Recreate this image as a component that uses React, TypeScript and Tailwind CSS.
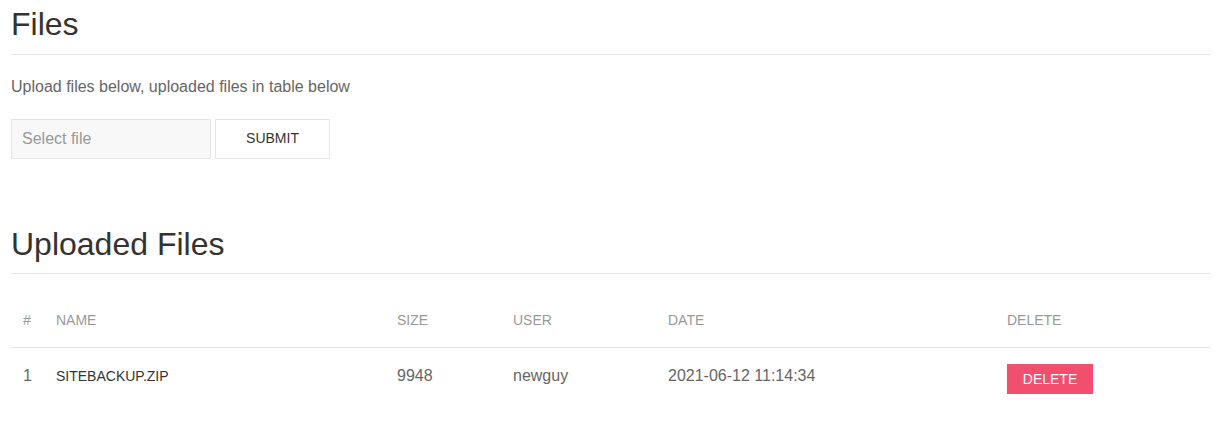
import React from "react";

export default function App() {
  const font = { fontFamily: '"Liberation Sans", Arial, sans-serif' };
  return (
    <div className="bg-white min-h-[432px] pl-[11px] pr-[18px] pt-[4px] text-[16px] leading-[1.5] text-[#666]" style={font}>
      <h2 className="text-[32px] leading-[1.3] text-[#333] font-normal pb-[8px] border-b border-[#e5e5e5]">Files</h2>
      <p className="mt-[20px]">Upload files below, uploaded files in table below</p>
      <form className="mt-[20px] flex gap-[4px]" onSubmit={(e) => e.preventDefault()}>
        <input
          type="text"
          placeholder="Select file"
          className="w-[200px] h-[40px] px-[10px] bg-[#f8f8f8] border border-[#e5e5e5] text-[16px] text-[#666] placeholder:text-[#999] outline-none"
          style={font}
        />
        <button
          type="submit"
          className="w-[115px] h-[40px] border border-[#e5e5e5] bg-transparent text-[14px] uppercase text-[#333] text-center"
          style={font}
        >
          Submit
        </button>
      </form>
      <h2 className="mt-[65px] text-[32px] leading-[1.3] text-[#333] font-normal pb-[8px] border-b border-[#e5e5e5]">Uploaded Files</h2>
      <div className="mt-[20px]">
        <div className="grid grid-cols-[33px_341px_116px_155px_339px_1fr] border-b border-[#e5e5e5] text-[14px] leading-[21px] uppercase text-[#999]">
          <div className="px-[12px] py-[16px]">#</div>
          <div className="px-[12px] py-[16px]">Name</div>
          <div className="px-[12px] py-[16px]">Size</div>
          <div className="px-[12px] py-[16px]">User</div>
          <div className="px-[12px] py-[16px]">Date</div>
          <div className="px-[12px] py-[16px]">Delete</div>
        </div>
        <div className="grid grid-cols-[33px_341px_116px_155px_339px_1fr] text-[16px] leading-[24px] text-[#666]">
          <div className="px-[12px] py-[16px]">1</div>
          <div className="px-[12px] py-[16px]">
            <span className="text-[14px] uppercase text-[#333]">sitebackup.zip</span>
          </div>
          <div className="px-[12px] py-[16px]">9948</div>
          <div className="px-[12px] py-[16px]">newguy</div>
          <div className="px-[12px] py-[16px]">2021-06-12 11:14:34</div>
          <div className="px-[12px] py-[16px]">
            <button
              type="button"
              className="w-[86px] h-[30px] leading-[30px] bg-[#f0506e] text-white text-[14px] uppercase text-center"
              style={font}
            >
              Delete
            </button>
          </div>
        </div>
      </div>
    </div>
  );
}
